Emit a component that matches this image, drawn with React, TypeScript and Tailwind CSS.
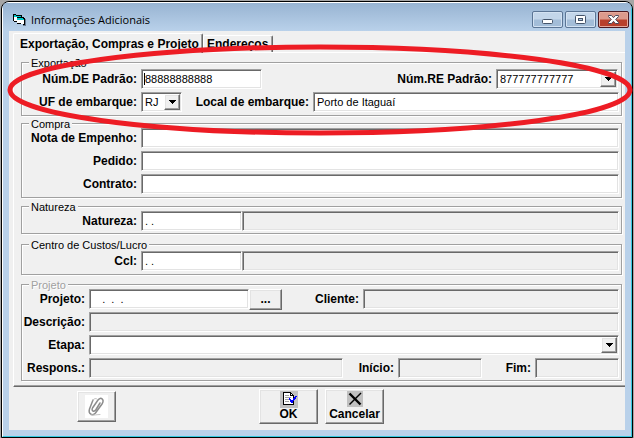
import type { ReactNode } from "react";

const SUNKEN =
  "border border-t-[#a0a0a0] border-l-[#a0a0a0] border-r-white border-b-white shadow-[inset_1px_1px_#696969,inset_-1px_-1px_#e3e3e3]";
const RAISED =
  "border border-t-white border-l-white border-r-[#696969] border-b-[#696969] bg-[#f0f0f0] shadow-[inset_-1px_-1px_#a0a0a0,inset_1px_1px_#e3e3e3]";

type FieldProps = {
  id: string;
  width?: string;
  value?: string;
  disabled?: boolean;
  label?: string;
};

function Field({ id, width = "min-w-0 flex-1", value = "", disabled, label }: FieldProps) {
  return (
    <input
      id={id}
      type="text"
      aria-label={label}
      defaultValue={value}
      disabled={disabled}
      className={`h-5 px-[3px] text-[11px] leading-4 outline-none ${SUNKEN} ${width} ${
        disabled ? "bg-[#f0f0f0]" : "bg-white"
      }`}
    />
  );
}

function Combo({ id, width, value }: { id: string; width: string; value: string }) {
  return (
    <div className={`relative h-5 ${width}`}>
      <select
        id={id}
        defaultValue={value}
        className={`block h-5 w-full appearance-none bg-white pr-5 pl-[3px] text-[11px] leading-4 outline-none ${SUNKEN}`}
      >
        <option value={value}>{value}</option>
      </select>
      <span
        className={`pointer-events-none absolute top-0.5 right-0.5 flex h-4 w-4 items-center justify-center ${RAISED}`}
      >
        <svg width="7" height="4" viewBox="0 0 7 4" shapeRendering="crispEdges" aria-hidden="true">
          <path d="M0 0h7v1h-1v1h-1v1h-1v1h-1v-1h-1v-1h-1v-1h-1z" fill="#000" />
        </svg>
      </span>
    </div>
  );
}

function Label({ htmlFor, width = "", children }: { htmlFor: string; width?: string; children: ReactNode }) {
  return (
    <label htmlFor={htmlFor} className={`shrink-0 text-right text-xs font-bold whitespace-nowrap ${width}`}>
      {children}
    </label>
  );
}

function Row({ children }: { children: ReactNode }) {
  return <div className="flex h-5 items-center gap-1">{children}</div>;
}

function Group({
  title,
  spacing,
  muted,
  children,
}: {
  title: string;
  spacing: string;
  muted?: boolean;
  children: ReactNode;
}) {
  return (
    <fieldset
      className={`min-w-0 border border-[#a0a0a0] pr-0.5 shadow-[inset_1px_1px_#fff,1px_1px_#fff] ${spacing}`}
    >
      <legend
        className={`ml-[7px] h-[9px] bg-[#f0f0f0] px-0.5 text-[11px] leading-[10px] ${
          muted ? "text-[#a0a0a0] [text-shadow:1px_1px_#fff]" : ""
        }`}
      >
        {title}
      </legend>
      <div className="flex flex-col gap-[3px]">{children}</div>
    </fieldset>
  );
}

function TitleButton({ label, close, children }: { label: string; close?: boolean; children: ReactNode }) {
  return (
    <button
      type="button"
      aria-label={label}
      className={`flex h-[17px] w-[31px] items-center justify-center rounded-xs border ${
        close
          ? "border-[#4c1a22] bg-linear-to-b from-[#dc9a8c] from-45% to-[#b8402c] to-55% shadow-[inset_0_0_0_1px_#e5a99c]"
          : "border-[#5b7595] bg-linear-to-b from-[#c3d6ea] from-45% to-[#a3bdd8] to-55% shadow-[inset_0_0_0_1px_#d3e2f2]"
      }`}
    >
      {children}
    </button>
  );
}

function TitleBar() {
  return (
    <header className="flex h-7 items-start bg-linear-to-b from-[#98b4d2] to-[#b9d1ea] pr-0.5 pl-2.5">
      <svg className="mt-[11px] mr-[5px] shrink-0" width="13" height="12" viewBox="0 0 13 12" shapeRendering="crispEdges" aria-hidden="true">
        <path d="M0 0h3v1h6v2h2v1h1v7h-2v-1h-6v-2h-3v-1h-1z" fill="#000" />
        <path d="M1 1h2v1h5v1h-7z" fill="#00c8c8" />
        <path d="M1 3h3v4h-3z" fill="#fff" />
        <path d="M4 4h6v1h1v1h-7z" fill="#00c8c8" />
        <path d="M4 6h7v3h-7zM8 9h3v1h-3z" fill="#fff" />
        <path d="M12 5h1v7h-3v-1h2z" fill="#6a7d94" />
      </svg>
      <h1 className="mt-2 flex-1 font-['Open_Sans',sans-serif] text-[11px] leading-[18px]">Informações Adicionais</h1>
      <div className="mt-2 flex gap-0.5">
        <TitleButton label="Minimizar">
          <svg width="13" height="13" viewBox="0 0 13 13" aria-hidden="true">
            <rect x="1.5" y="6.5" width="10" height="4" rx="1" fill="#fff" stroke="#44546a" />
          </svg>
        </TitleButton>
        <TitleButton label="Maximizar">
          <svg width="13" height="13" viewBox="0 0 13 13" aria-hidden="true">
            <rect x="1.5" y="2.5" width="10" height="8" rx="1" fill="#fff" stroke="#44546a" />
            <rect x="4.5" y="5.5" width="4" height="2" fill="#b3cae2" stroke="#44546a" />
          </svg>
        </TitleButton>
        <TitleButton label="Fechar" close>
          <svg width="13" height="13" viewBox="0 0 13 13" aria-hidden="true">
            <path
              d="M1.500 2.500h3l2 2.200l2-2.200h3v1l-2.800 3l2.800 3v1h-3l-2-2.200l-2 2.200h-3v-1l2.800-3l-2.800-3z"
              fill="#fff"
              stroke="#4a4a5c"
            />
          </svg>
        </TitleButton>
      </div>
    </header>
  );
}

function Tabs() {
  return (
    <div role="tablist" className="ml-1 flex h-[21px] items-end">
      <button
        type="button"
        role="tab"
        aria-selected="true"
        className="relative z-10 -mb-px flex h-5 w-[190px] items-center rounded-t-xs border border-b-0 border-t-white border-l-white border-r-[#696969] bg-[#f0f0f0] pl-1.5 text-xs font-bold whitespace-nowrap shadow-[inset_-1px_0_#a0a0a0]"
      >
        Exportação, Compras e Projeto
      </button>
      <button
        type="button"
        role="tab"
        aria-selected="false"
        className="flex h-[17px] w-[70px] items-center rounded-t-xs border border-b-0 border-t-white border-l-white border-r-[#696969] bg-[#f0f0f0] pl-[3px] text-xs font-bold whitespace-nowrap shadow-[inset_-1px_0_#a0a0a0]"
      >
        Endereços
      </button>
    </div>
  );
}

function Panel() {
  return (
    <div className="ml-1 border border-r-0 border-t-white border-l-white border-b-[#696969] pt-[5px] pr-[3px] pb-[5px] pl-[7px] shadow-[inset_0_-1px_#a0a0a0]">
      <Group title="Exportação" spacing="pt-0.5 pb-[3px]">
        <Row>
          <Label htmlFor="de" width="w-[115px]">Núm.DE Padrão:</Label>
          <div className="relative flex">
            <Field id="de" width="w-[121px]" value="88888888888" />
            <span className="absolute top-1 left-[3px] h-3 w-px bg-black" />
          </div>
          <div className="flex-1" />
          <Label htmlFor="re">Núm.RE Padrão:</Label>
          <Combo id="re" width="mr-px w-[122px]" value="877777777777" />
        </Row>
        <Row>
          <Label htmlFor="uf" width="w-[115px]">UF de embarque:</Label>
          <Combo id="uf" width="w-[41px]" value="RJ" />
          <Label htmlFor="local" width="w-[123px]">Local de embarque:</Label>
          <Field id="local" value="Porto de Itaguaí" />
        </Row>
      </Group>

      <Group title="Compra" spacing="mt-[3px] pb-[3px]">
        <Row>
          <Label htmlFor="nota" width="w-[115px]">Nota de Empenho:</Label>
          <Field id="nota" />
        </Row>
        <Row>
          <Label htmlFor="pedido" width="w-[115px]">Pedido:</Label>
          <Field id="pedido" />
        </Row>
        <Row>
          <Label htmlFor="contrato" width="w-[115px]">Contrato:</Label>
          <Field id="contrato" />
        </Row>
      </Group>

      <Group title="Natureza" spacing="mt-1 pb-0.5">
        <Row>
          <Label htmlFor="natureza" width="w-[115px]">Natureza:</Label>
          <div className="flex min-w-0 flex-1">
            <Field id="natureza" width="w-[101px]" value=". ." />
            <Field id="natureza-nome" label="Nome da natureza" disabled />
          </div>
        </Row>
      </Group>

      <Group title="Centro de Custos/Lucro" spacing="mt-1.5 pt-0.5 pb-[3px]">
        <Row>
          <Label htmlFor="ccl" width="w-[115px]">Ccl:</Label>
          <div className="flex min-w-0 flex-1">
            <Field id="ccl" width="w-[101px]" value=". ." />
            <Field id="ccl-nome" label="Nome do centro" disabled />
          </div>
        </Row>
      </Group>

      <Group title="Projeto" spacing="mt-[5px] pb-0.5" muted>
        <Row>
          <Label htmlFor="projeto" width="w-[63px]">Projeto:</Label>
          <div className="flex items-center">
            <Field id="projeto" width="w-40" value="   .  .  ." />
            <button
              type="button"
              aria-label="Procurar projeto"
              className={`h-[21px] w-[33px] text-xs leading-4 font-bold ${RAISED}`}
            >
              ...
            </button>
          </div>
          <Label htmlFor="cliente" width="w-[73px]">Cliente:</Label>
          <Field id="cliente" disabled />
        </Row>
        <Row>
          <Label htmlFor="descricao" width="w-[63px]">Descrição:</Label>
          <Field id="descricao" disabled />
        </Row>
        <Row>
          <Label htmlFor="etapa" width="w-[63px]">Etapa:</Label>
          <Combo id="etapa" width="min-w-0 flex-1" value="" />
        </Row>
        <Row>
          <Label htmlFor="respons" width="w-[63px]">Respons.:</Label>
          <Field id="respons" disabled />
          <Label htmlFor="inicio" width="w-[47px]">Início:</Label>
          <Field id="inicio" width="w-[84px]" disabled />
          <Label htmlFor="fim" width="w-[45px]">Fim:</Label>
          <Field id="fim" width="w-[84px]" disabled />
        </Row>
      </Group>
    </div>
  );
}

function Footer() {
  return (
    <footer className="flex items-center pt-0.5 pb-1.5 pl-[68px]">
      <button
        type="button"
        aria-label="Anexar"
        className={`mr-[143px] flex h-[31px] w-[39px] items-center justify-center ${RAISED}`}
      >
        <svg width="23" height="23" viewBox="0 0 23 23" aria-hidden="true">
          <rect width="23" height="23" fill="#fff" />
          <g fill="none" strokeLinecap="round">
            <path
              d="M8 5L4.500 14c-1.500 5 3 7.500 6 4L17 9c3-5-1.500-7.500-4-4L7.500 13c-1.500 3 1.500 4.500 3.500 1.500L15 8"
              stroke="#8c8c8c"
              strokeWidth="1.500"
            />
            <path d="M8 5c1-1.500 3-2 4-1M6 20c3 .5 6-.5 9-.5" stroke="#c4c4c4" />
          </g>
        </svg>
      </button>
      <div className="flex gap-[7px]">
        <button type="button" className={`flex h-[35px] w-[59px] flex-col items-center pt-px text-xs font-bold ${RAISED}`}>
          <svg className="shrink-0" width="18" height="17" viewBox="0 0 18 17" shapeRendering="crispEdges" aria-hidden="true">
            <rect width="18" height="17" fill="#c0c0c0" />
            <path d="M3.500 1.500h7l3 3v9h-10z" fill="#fff" stroke="#000" />
            <path d="M10.500 1.500v3h3" fill="none" stroke="#000" />
            <path d="M5 4.500h4M5 6.500h6M5 8.500h4M5 10.500h4" stroke="#a0a0a0" />
            <path d="M9 7.500l3 3.500L16.500 5" fill="none" stroke="#00f" strokeWidth="1.800" />
          </svg>
          <span className="leading-[13px]">OK</span>
        </button>
        <button type="button" className={`flex h-[35px] w-[59px] flex-col items-center pt-px text-xs font-bold ${RAISED}`}>
          <svg className="shrink-0" width="16" height="17" viewBox="0 0 16 17" aria-hidden="true">
            <rect width="16" height="16" fill="#c0c0c0" />
            <path d="M2.500 2.500L13.500 13.500" stroke="#000" strokeWidth="2.400" />
            <path d="M14 2L2.500 13.500" stroke="#000" strokeWidth="1.500" />
          </svg>
          <span className="leading-[13px]">Cancelar</span>
        </button>
      </div>
    </footer>
  );
}

export default function App() {
  return (
    <div className="relative bg-[#a6a6a6] px-px pt-px font-['Liberation_Sans',Arial,sans-serif] text-black">
      <div className="overflow-hidden rounded-t-lg border border-black bg-[#b9d1ea]">
        <div className="rounded-t-[7px] border border-t-white border-l-white border-r-[#35c8e0] border-b-[#35c8e0]">
          <TitleBar />
          <main className="mx-1.5 mb-1.5 bg-[#f0f0f0]">
            <Tabs />
            <Panel />
            <Footer />
          </main>
        </div>
      </div>
      <svg
        className="pointer-events-none absolute top-10 left-0 z-20 h-[100px] w-full"
        viewBox="0 0 634 100"
        preserveAspectRatio="none"
        aria-hidden="true"
      >
        <ellipse cx="320" cy="50" rx="310" ry="43" fill="none" stroke="#ed1c24" strokeWidth="5" />
      </svg>
    </div>
  );
}
